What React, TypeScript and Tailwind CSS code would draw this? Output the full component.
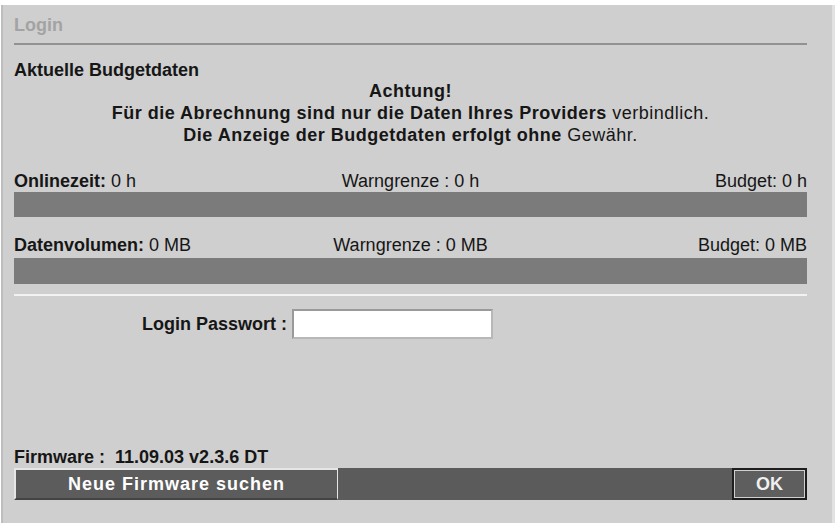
import React from 'react';

// Router login page: budget info + password form
const font = "font-['Liberation_Sans',Arial,sans-serif]";

interface BudgetRowProps {
  label: string;
  value: string;
  warn: string;
  budget: string;
}

const BudgetRow = ({ label, value, warn, budget }: BudgetRowProps) => (
  <div>
    <div className="grid grid-cols-3 text-[18px] leading-[18px] text-[#161616]">
      <div className="text-left">
        <span className="font-bold">{label}</span> {value}
      </div>
      <div className="text-center">{warn}</div>
      <div className="text-right">{budget}</div>
    </div>
  </div>
);

const App = () => {
  return (
    <div className={`w-[835px] h-[523px] bg-white pt-[5px] ${font}`}>
      <div className="flex h-full">
        <div className="flex-1 h-full bg-[#cfcfcf] border-l-2 border-[#bdbdbd] ml-[1px] pl-[11px] pr-[25px]">
          {/* Title */}
          <div className="pt-[11px] text-[18px] leading-[18px] font-bold text-[#a3a3a3]">Login</div>
          <div className="mt-[9px] h-[2px] bg-[#929292]" />

          <div className="mt-[16px] text-[18px] leading-[18px] font-bold text-[#161616]">Aktuelle Budgetdaten</div>

          {/* Notice */}
          <div className="mt-[1px] text-center text-[18px] leading-[22px] font-bold tracking-[0.5px] text-[#161616]">
            <div>Achtung!</div>
            <div>
              Für die Abrechnung sind nur die Daten Ihres Providers <span className="font-normal">verbindlich.</span>
            </div>
            <div>
              Die Anzeige der Budgetdaten erfolgt ohne <span className="font-normal">Gewähr.</span>
            </div>
          </div>

          {/* Budget bars */}
          <div className="mt-[26px]">
            <BudgetRow label="Onlinezeit:" value="0 h" warn="Warngrenze : 0 h" budget="Budget: 0 h" />
          </div>
          <div className="mt-[2px] h-[25px] bg-[#7b7b7b]" />

          <div className="mt-[19px]">
            <BudgetRow label="Datenvolumen:" value="0 MB" warn="Warngrenze : 0 MB" budget="Budget: 0 MB" />
          </div>
          <div className="mt-[4px] h-[26px] bg-[#7b7b7b]" />

          <div className="mt-[10px] h-[2px] bg-[#f2f2f2]" />

          {/* Password */}
          <div className="mt-[13px] flex items-center">
            <div className="w-[273px] text-right text-[18px] leading-[18px] font-bold text-[#161616]">Login Passwort :</div>
            <input
              type="password"
              className="ml-[5px] w-[201px] h-[30px] bg-white border-2 border-t-[#9a9a9a] border-l-[#9a9a9a] border-r-[#b8b8b8] border-b-[#b8b8b8] outline-none"
            />
          </div>

          {/* Firmware */}
          <div className="mt-[109px] text-[18px] leading-[18px] font-bold text-[#161616]">
            Firmware :&nbsp; 11.09.03 v2.3.6 DT
          </div>
          <div className="mt-[2px] h-[32px] bg-[#5b5b5b] flex items-stretch justify-between">
            <button className="w-[324px] border-t-2 border-l-2 border-r border-[#e6e6e6] border-b-2 border-b-[#444] bg-[#5c5c5c] text-white text-[18px] font-bold tracking-[1px] leading-none">
              Neue Firmware suchen
            </button>
            <button className="w-[75px] border-2 border-[#1e1e1e] bg-[#5e5e5e] p-0">
              <span className="flex h-full items-center justify-center border border-[#cfcfcf] text-[#f0f0f0] text-[18px] font-bold leading-none">
                OK
              </span>
            </button>
          </div>
        </div>
        <div className="w-[3px] h-full bg-[#e2e2e2]" />
      </div>
    </div>
  );
};

export default App;
